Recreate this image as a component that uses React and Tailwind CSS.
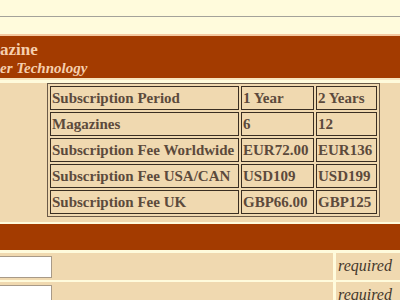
// Subscription page: banner, price table and the start of the order form.

const rows = [
  ['Subscription Period', '1 Year', '2 Years'],
  ['Magazines', '6', '12'],
  ['Subscription Fee Worldwide', 'EUR72.00', 'EUR136'],
  ['Subscription Fee USA/CAN', 'USD109', 'USD199'],
  ['Subscription Fee UK', 'GBP66.00', 'GBP125'],
];

function PriceTable() {
  return (
    <table className="ml-[47px] mt-[3px] border border-[#6b5a48] border-separate border-spacing-[2px]">
      <tbody>
        {rows.map((r) => (
          <tr key={r[0]}>
            <td className="w-[189px] h-[24px] border border-[#3a2e22] px-[1px] py-0 leading-[22px] align-middle">{r[0]}</td>
            <td className="w-[73px] h-[24px] border border-[#3a2e22] px-[1px] py-0 leading-[22px] align-middle">{r[1]}</td>
            <td className="w-[61px] h-[24px] border border-[#3a2e22] px-[1px] py-0 leading-[22px] align-middle">{r[2]}</td>
          </tr>
        ))}
      </tbody>
    </table>
  );
}

function FormRow() {
  return (
    <div className="flex gap-[3px] h-[27px]">
      <div className="w-[333px] bg-[#f0d9b0] pt-[3px] overflow-hidden">
        <div className="-ml-[10px] w-[62px] h-[22px] bg-white border border-[#a89a88]" />
      </div>
      <div className="flex-1 bg-[#f0d9b0] pl-[2px] italic text-[16px] leading-[26px] text-[#45382c]">required</div>
    </div>
  );
}

export default function App() {
  return (
    <div className="w-[400px] h-[300px] overflow-hidden bg-[#fffbdc] [font-family:Liberation_Serif,serif]">
      <div className="h-[16px]" />
      <div className="h-[1px] bg-[#a4a29a]" />
      <div className="h-[17px]" />
      <div className="border-t-[2px] border-[#f5c8a0] bg-[#a33b00] h-[44px] pt-[4px] text-[#f6cfad] font-bold">
        <div className="text-[17px] leading-[19px]">azine</div>
        <div className="italic text-[15px] leading-[18px]">er Technology</div>
      </div>
      <div className="h-[2px] bg-[#f8e4be]" />
      <div className="h-[139px] bg-[#f0d9b0] text-[15px] font-bold text-[#5c4a3c]">
        <PriceTable />
      </div>
      <div className="h-[2px]" />
      <div className="h-[26px] bg-[#a33b00]" />
      <div className="h-[3px]" />
      <div className="flex flex-col gap-[2px]">
        <FormRow />
        <FormRow />
      </div>
    </div>
  );
}
